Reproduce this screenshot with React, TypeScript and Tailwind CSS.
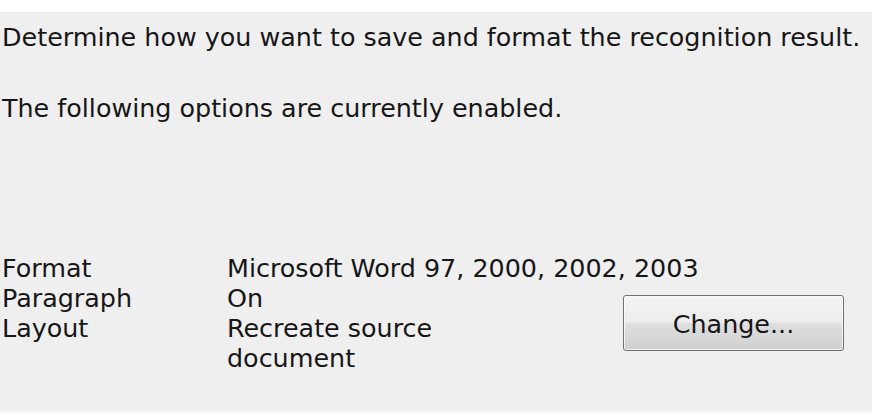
export default function App() {
  const font = { fontFamily: '"DejaVu Sans", Verdana, sans-serif' };

  return (
    <div className="w-[872px] h-[414px] bg-white flex flex-col" style={font}>
      {/* white strip above the panel */}
      <div className="h-[12px] bg-white shrink-0" />

      <div className="flex-1 bg-[#efefef] text-[#161616] text-[25.4px] leading-[30px] pl-[2px] pt-[10px]">
        <p>Determine how you want to save and format the recognition result.</p>
        <p className="mt-[41px]">The following options are currently enabled.</p>

        {/* current options */}
        <div className="mt-[130px] grid grid-cols-[225px_250px_1fr]">
          <div>Format</div>
          <div className="col-span-2">Microsoft Word 97, 2000, 2002, 2003</div>

          <div>Paragraph</div>
          <div>On</div>
          <div className="row-span-2 justify-self-end self-start mt-[12px] mr-[28px]">
            <button
              type="button"
              className="w-[221px] h-[56px] rounded-[3px] border border-[#707070] bg-[linear-gradient(to_bottom,#f4f4f4_0%,#ececec_48%,#dedede_52%,#d0d0d0_100%)] shadow-[inset_0_0_0_1px_rgba(255,255,255,0.7)] flex items-center justify-center pt-[1px] text-[25.4px] text-[#161616]"
            >
              Change...
            </button>
          </div>

          <div>Layout</div>
          <div>
            Recreate source
            <br />
            document
          </div>
        </div>
      </div>

      <div className="h-[3px] bg-[#f8f8f8] shrink-0" />
    </div>
  );
}
